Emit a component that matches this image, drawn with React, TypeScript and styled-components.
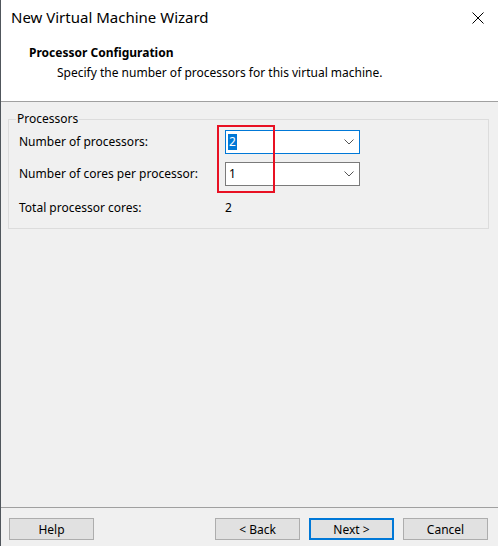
import React from "react";
import styled, { createGlobalStyle } from "styled-components";

const GlobalStyle = createGlobalStyle`
    html, body {
        margin: 0;
        padding: 0;
        background: #f0f0f0;
    }
    * {
        box-sizing: border-box;
    }
`;

const Window = styled.div`
    width: 498px;
    height: 546px;
    display: flex;
    flex-direction: column;
    background: #f0f0f0;
    border-left: 1px solid #50565c;
    font-family: "Segoe UI", "Noto Sans", sans-serif;
    font-size: 12px;
    color: #000;
    overflow: hidden;
`;

const TitleBar = styled.div`
    height: 36px;
    display: flex;
    align-items: center;
    justify-content: space-between;
    padding: 0 14px 0 10px;
    background: #fff;
`;

const Title = styled.div`
    font-size: 15px;
    line-height: 20px;
    margin-top: -2px;
`;

const CloseButton = styled.div`
    width: 12px;
    height: 12px;
    display: flex;
    margin-top: -1px;
`;

const Header = styled.div`
    height: 66px;
    background: #fff;
    border-bottom: 1px solid #a0a0a0;
    padding: 8px 0 0 28px;
`;

const HeaderTitle = styled.div`
    font-weight: 700;
    line-height: 17px;
`;

const HeaderText = styled.div`
    line-height: 17px;
    margin-top: 3px;
    padding-left: 28px;
`;

const Content = styled.div`
    flex: 1;
    padding: 9px 8px 0 7px;
`;

const GroupBox = styled.fieldset`
    margin: 0;
    padding: 3px 10px 6px 10px;
    border: 1px solid #dcdcdc;
    width: 481px;
`;

const Legend = styled.legend`
    padding: 0 1px;
    margin-left: -3px;
    line-height: 16px;
    margin-top: -1px;
`;

const FieldGrid = styled.div`
    position: relative;
    display: grid;
    grid-template-columns: 206px 135px;
    grid-template-rows: 24px 24px 28px;
    row-gap: 8px;
    align-items: center;
`;

const Label = styled.div`
    line-height: 16px;
`;

const Combo = styled.div<{ $focused?: boolean }>`
    height: 24px;
    display: flex;
    align-items: center;
    justify-content: space-between;
    background: #fff;
    border: 1px solid ${(p) => (p.$focused ? "#0078d7" : "#7a7a7a")};
    padding: 0 5px 0 2px;
`;

const ComboValue = styled.span<{ $selected?: boolean }>`
    line-height: 16px;
    padding: 0 1px;
    background: ${(p) => (p.$selected ? "#0078d7" : "transparent")};
    color: ${(p) => (p.$selected ? "#fff" : "#000")};
`;

const Highlight = styled.div`
    position: absolute;
    left: 198px;
    top: -5px;
    width: 58px;
    height: 68px;
    border: 2px solid #e81123;
    pointer-events: none;
`;

const Footer = styled.div`
    height: 39px;
    border-top: 1px solid #a0a0a0;
    display: flex;
    align-items: flex-start;
    padding: 10px 0 0 8px;
`;

const ButtonGroup = styled.div`
    display: flex;
    gap: 9px;
    margin-left: auto;
    margin-right: 10px;
`;

const Button = styled.button<{ $default?: boolean }>`
    width: 85px;
    height: 22px;
    padding: 0;
    font-family: inherit;
    font-size: 12px;
    color: #000;
    background: #e1e1e1;
    border: ${(p) => (p.$default ? "2px solid #0078d7" : "1px solid #adadad")};
`;

const Chevron = () => (
    <svg width="10" height="6" viewBox="0 0 10 6">
        <path d="M0.5 0.5 L5 5 L9.5 0.5" fill="none" stroke="#555" strokeWidth="1" />
    </svg>
);

export default function App() {
    return (
        <>
            <GlobalStyle />
            <Window>
                <TitleBar>
                    <Title>New Virtual Machine Wizard</Title>
                    <CloseButton>
                        <svg width="12" height="12" viewBox="0 0 12 12">
                            <path d="M0.5 0.5 L11.5 11.5 M11.5 0.5 L0.5 11.5" stroke="#000" strokeWidth="1" />
                        </svg>
                    </CloseButton>
                </TitleBar>
                <Header>
                    <HeaderTitle>Processor Configuration</HeaderTitle>
                    <HeaderText>Specify the number of processors for this virtual machine.</HeaderText>
                </Header>
                <Content>
                    <GroupBox>
                        <Legend>Processors</Legend>
                        <FieldGrid>
                            <Label>Number of processors:</Label>
                            <Combo $focused>
                                <ComboValue $selected>2</ComboValue>
                                <Chevron />
                            </Combo>
                            <Label>Number of cores per processor:</Label>
                            <Combo>
                                <ComboValue>1</ComboValue>
                                <Chevron />
                            </Combo>
                            <Label>Total processor cores:</Label>
                            <Label>2</Label>
                            <Highlight />
                        </FieldGrid>
                    </GroupBox>
                </Content>
                <Footer>
                    <Button>Help</Button>
                    <ButtonGroup>
                        <Button>&lt; Back</Button>
                        <Button $default>Next &gt;</Button>
                        <Button>Cancel</Button>
                    </ButtonGroup>
                </Footer>
            </Window>
        </>
    );
}
